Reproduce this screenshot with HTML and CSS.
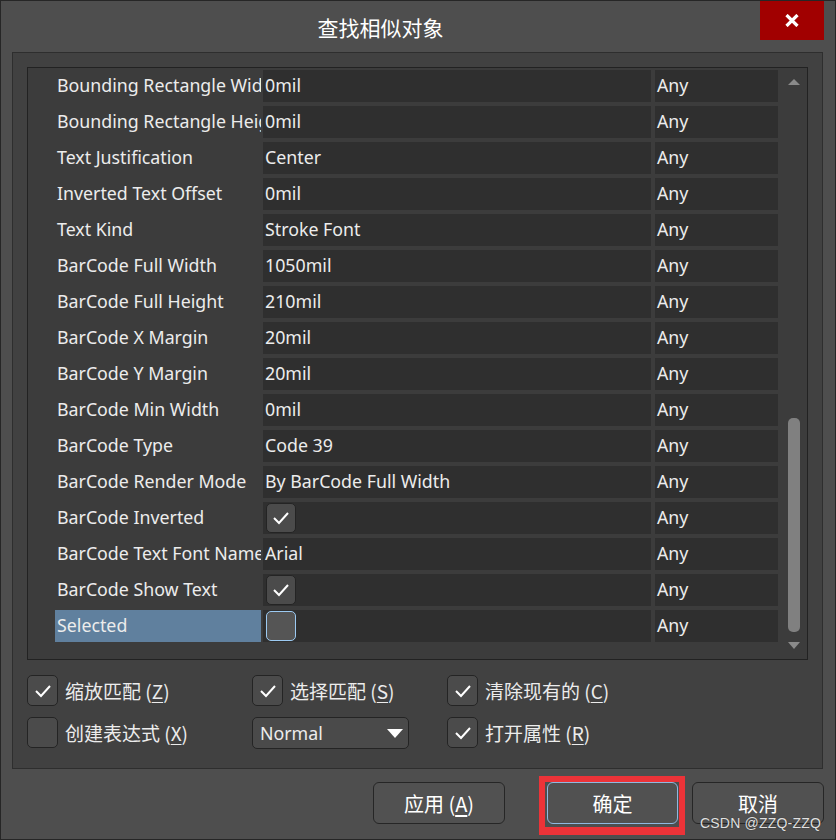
FILE: index.html
```html
<!DOCTYPE html>
<html lang="zh">
<head>
<meta charset="utf-8">
<title>查找相似对象</title>
<link rel="stylesheet" href="styles.css">
</head>
<body>
<div class="window">
  <div class="titlebar">
    <div class="title">查找相似对象</div>
    <div class="close"><svg width="14" height="13" viewBox="0 0 14 13"><path d="M1.5 1 L12.5 12 M12.5 1 L1.5 12" stroke="#fff" stroke-width="3.2" fill="none"/></svg></div>
  </div>
  <div class="panel">
    <div class="gridbox">
      <div class="rows">
        <div class="row"><div class="name">Bounding Rectangle Width</div><div class="val">0mil</div><div class="any">Any</div></div>
        <div class="row"><div class="name">Bounding Rectangle Height</div><div class="val">0mil</div><div class="any">Any</div></div>
        <div class="row"><div class="name">Text Justification</div><div class="val">Center</div><div class="any">Any</div></div>
        <div class="row"><div class="name">Inverted Text Offset</div><div class="val">0mil</div><div class="any">Any</div></div>
        <div class="row"><div class="name">Text Kind</div><div class="val">Stroke Font</div><div class="any">Any</div></div>
        <div class="row"><div class="name">BarCode Full Width</div><div class="val">1050mil</div><div class="any">Any</div></div>
        <div class="row"><div class="name">BarCode Full Height</div><div class="val">210mil</div><div class="any">Any</div></div>
        <div class="row"><div class="name">BarCode X Margin</div><div class="val">20mil</div><div class="any">Any</div></div>
        <div class="row"><div class="name">BarCode Y Margin</div><div class="val">20mil</div><div class="any">Any</div></div>
        <div class="row"><div class="name">BarCode Min Width</div><div class="val">0mil</div><div class="any">Any</div></div>
        <div class="row"><div class="name">BarCode Type</div><div class="val">Code 39</div><div class="any">Any</div></div>
        <div class="row"><div class="name">BarCode Render Mode</div><div class="val">By BarCode Full Width</div><div class="any">Any</div></div>
        <div class="row"><div class="name">BarCode Inverted</div><div class="val"><span class="cb cell-cb"><svg width="18" height="14" viewBox="0 0 18 14"><path d="M2 7 L7 12 L16 2" stroke="#fff" stroke-width="2" fill="none"/></svg></span></div><div class="any">Any</div></div>
        <div class="row"><div class="name">BarCode Text Font Name</div><div class="val">Arial</div><div class="any">Any</div></div>
        <div class="row"><div class="name">BarCode Show Text</div><div class="val"><span class="cb cell-cb"><svg width="18" height="14" viewBox="0 0 18 14"><path d="M2 7 L7 12 L16 2" stroke="#fff" stroke-width="2" fill="none"/></svg></span></div><div class="any">Any</div></div>
        <div class="row"><div class="name sel">Selected</div><div class="val"><span class="cb cell-cb focus"></span></div><div class="any">Any</div></div>
      </div>
      <div class="scrollbar">
        <div class="arrow up"></div>
        <div class="track"></div>
        <div class="thumb"></div>
        <div class="arrow down"></div>
      </div>
    </div>
    <div class="options">
      <label class="opt"><span class="cb"><svg width="18" height="14" viewBox="0 0 18 14"><path d="M2 7 L7 12 L16 2" stroke="#fff" stroke-width="2" fill="none"/></svg></span><span>缩放匹配 (<u>Z</u>)</span></label>
      <label class="opt"><span class="cb"><svg width="18" height="14" viewBox="0 0 18 14"><path d="M2 7 L7 12 L16 2" stroke="#fff" stroke-width="2" fill="none"/></svg></span><span>选择匹配 (<u>S</u>)</span></label>
      <label class="opt"><span class="cb"><svg width="18" height="14" viewBox="0 0 18 14"><path d="M2 7 L7 12 L16 2" stroke="#fff" stroke-width="2" fill="none"/></svg></span><span>清除现有的 (<u>C</u>)</span></label>
      <label class="opt"><span class="cb"></span><span>创建表达式 (<u>X</u>)</span></label>
      <div class="select"><span>Normal</span><svg width="16" height="9" viewBox="0 0 16 9"><path d="M0 0 L16 0 L8 9 Z" fill="#fff"/></svg></div>
      <label class="opt"><span class="cb"><svg width="18" height="14" viewBox="0 0 18 14"><path d="M2 7 L7 12 L16 2" stroke="#fff" stroke-width="2" fill="none"/></svg></span><span>打开属性 (<u>R</u>)</span></label>
    </div>
  </div>
  <div class="footer">
    <button class="btn">应用 (<u>A</u>)</button>
    <div class="mark"><button class="btn primary">确定</button></div>
    <button class="btn">取消</button>
  </div>
  <div class="watermark">CSDN @ZZQ-ZZQ</div>
</div>
</body>
</html>
```
FILE: styles.css
```css
* { box-sizing: border-box; }
html, body { margin: 0; padding: 0; background: #4e4e4e; }
body {
  font-family: "Noto Sans", "Noto Sans CJK SC", sans-serif;
  color: #ececec;
}
.window {
  position: relative;
  width: 836px;
  height: 840px;
  background: #4e4e4e;
  border: 1px solid #262626;
  display: flex;
  flex-direction: column;
}
.titlebar {
  height: 51px;
  display: flex;
  align-items: flex-start;
}
.title {
  flex: 1;
  text-align: center;
  font-family: "Noto Sans CJK SC", sans-serif;
  font-size: 21px;
  color: #fff;
  line-height: 24px;
  padding-top: 14px;
}
.close {
  width: 64px;
  height: 39px;
  background: #a10000;
  margin-right: 11px;
  display: flex;
  align-items: center;
  justify-content: center;
}
.panel {
  margin: 0 12px 0 11px;
  height: 717px;
  background: #414141;
  border: 1px solid #2e2e2e;
  padding: 14px 0 0 14px;
}
.gridbox {
  width: 781px;
  height: 593px;
  background: #3c3c3c;
  border: 1px solid #222;
  display: flex;
}
.rows {
  padding: 2px 0 0 27px;
  display: flex;
  flex-direction: column;
  gap: 4px;
}
.row {
  display: flex;
  height: 32px;
  font-size: 17.8px;
  line-height: 30px;
}
.name {
  width: 206px;
  padding-left: 2px;
  white-space: nowrap;
  overflow: hidden;
}
.name.sel { background: #60809e; }
.val {
  width: 388px;
  margin-left: 2px;
  background: #2f2f2f;
  padding-left: 2px;
  display: flex;
  align-items: flex-start;
  white-space: nowrap;
}
.any {
  width: 123px;
  margin-left: 4px;
  background: #2f2f2f;
  padding-left: 2px;
}
.scrollbar {
  width: 29px;
  display: flex;
  flex-direction: column;
  align-items: center;
  padding: 11px 0 10px 0;
}
.arrow { width: 0; height: 0; border-left: 6px solid transparent; border-right: 6px solid transparent; }
.arrow.up { border-bottom: 6px solid #8a8a8a; margin-left: 2px; }
.arrow.down { border-top: 7px solid #8a8a8a; margin-left: 2px; }
.track { flex: 1; }
.thumb {
  width: 12px;
  height: 214px;
  background: #808080;
  border-radius: 5px;
  margin: 0 0 10px 2px;
}
.cb {
  width: 31px;
  height: 31px;
  flex: none;
  background: #4b4b4b;
  border: 1px solid #242424;
  border-radius: 5px;
  display: inline-flex;
  align-items: center;
  justify-content: center;
}
.cell-cb { width: 30px; height: 30px; margin: 1px 0 0 1px; }
.cb.focus { border-color: #9ccaf2; background: #555; }
.options {
  display: grid;
  grid-template-columns: 225px 195px auto;
  row-gap: 11px;
  padding-top: 15px;
  font-family: "Noto Sans CJK SC", sans-serif;
  font-size: 19px;
}
.opt {
  display: flex;
  align-items: center;
  gap: 7px;
  height: 31px;
  white-space: nowrap;
}
.opt u, .btn u { text-underline-offset: 3px; }
.select {
  width: 157px;
  height: 32px;
  background: #4a4a4a;
  border: 1px solid #242424;
  border-radius: 5px;
  display: flex;
  align-items: center;
  justify-content: space-between;
  padding: 0 5px 0 7px;
  font-family: "Noto Sans", sans-serif;
  font-size: 17.8px;
}
.footer {
  display: flex;
  justify-content: flex-end;
  align-items: flex-start;
  padding: 7px 11px 0 0;
}
.btn {
  width: 132px;
  height: 42px;
  margin-top: 6px;
  background: #515151;
  border: 1px solid #262626;
  border-radius: 6px;
  color: #fff;
  font-family: "Noto Sans CJK SC", sans-serif;
  font-size: 20px;
  padding: 0;
}
.btn.primary { margin-top: 0; width: 131px; border-color: #8fb8e0; }
.mark {
  margin: 0 7px 0 34px;
  border: 6px solid #ec3338;
  border-bottom-width: 8px;
  padding: 0 1px 3px 2px;
}
.watermark {
  position: absolute;
  right: 14px;
  bottom: 8px;
  font-family: "Liberation Sans", sans-serif;
  font-size: 14px;
  color: #e0e0e0;
  letter-spacing: 0.2px;
  text-shadow: 0 0 1px #222;
}
```
